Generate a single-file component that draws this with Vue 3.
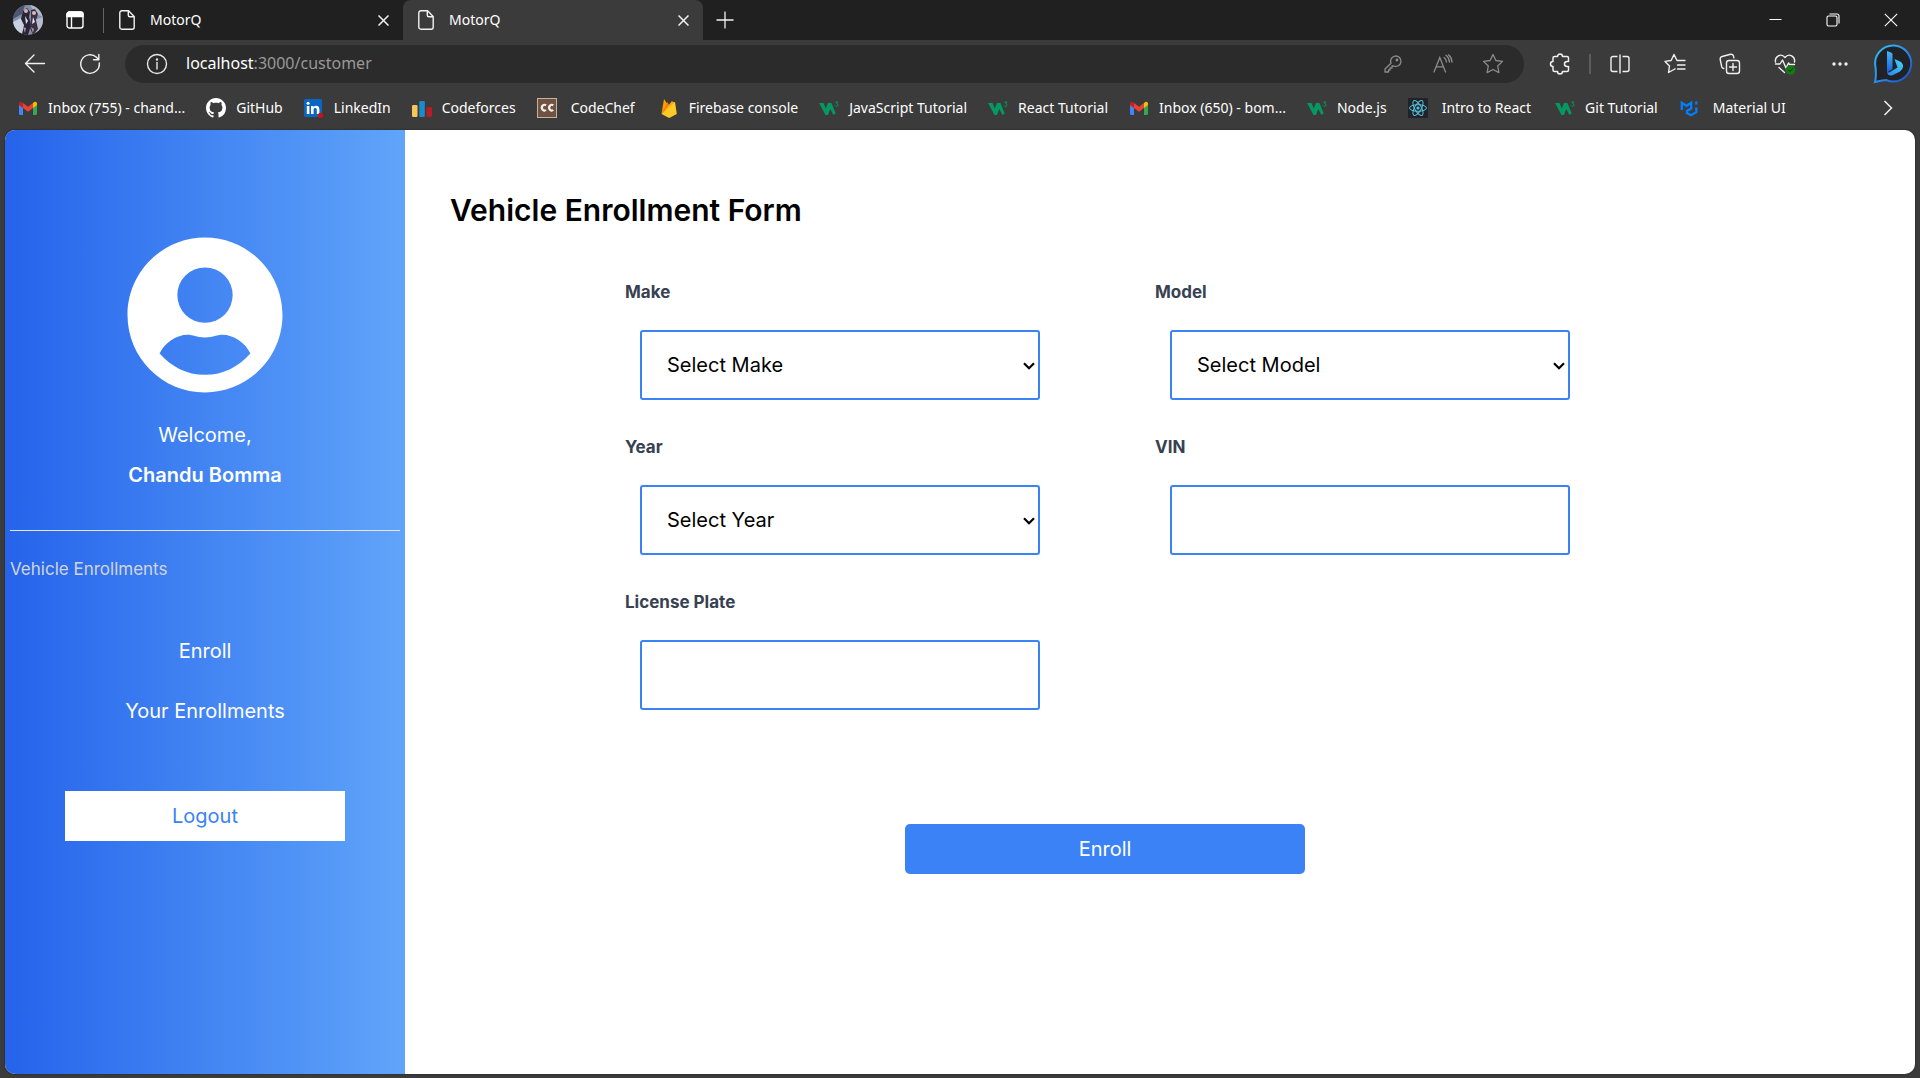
<script setup>
import { ref } from 'vue'

const bookmarks = [
  { icon: 'gmail', label: 'Inbox (755) - chand...' },
  { icon: 'github', label: 'GitHub' },
  { icon: 'linkedin', label: 'LinkedIn' },
  { icon: 'codeforces', label: 'Codeforces' },
  { icon: 'codechef', label: 'CodeChef', wide: true },
  { icon: 'firebase', label: 'Firebase console' },
  { icon: 'w3', label: 'JavaScript Tutorial' },
  { icon: 'w3', label: 'React Tutorial' },
  { icon: 'gmail', label: 'Inbox (650) - bom...' },
  { icon: 'w3', label: 'Node.js' },
  { icon: 'react', label: 'Intro to React', wide: true },
  { icon: 'w3', label: 'Git Tutorial' },
  { icon: 'mui', label: 'Material UI', wide: true },
]

const fields = [
  { id: 'make', label: 'Make', placeholder: 'Select Make' },
  { id: 'model', label: 'Model', placeholder: 'Select Model' },
  { id: 'year', label: 'Year', placeholder: 'Select Year' },
  { id: 'vin', label: 'VIN' },
  { id: 'plate', label: 'License Plate' },
]

const form = ref({ make: '', model: '', year: '', vin: '', plate: '' })
</script>

<template>
  <div class="window">
    <header class="chrome">
      <div class="tabstrip">
        <button class="profile" aria-label="Profile">
          <svg width="30" height="30" viewBox="0 0 30 30">
            <defs><clipPath id="face"><circle cx="15" cy="15" r="15" /></clipPath></defs>
            <g clip-path="url(#face)">
              <rect width="30" height="30" fill="#8290a8" />
              <path d="M0 0h12l-3 9-9 5z" fill="#4d5672" />
              <path d="M17 0h13v12l-8-4z" fill="#aebacb" />
              <path d="M0 17l8-4 4 8-4 9H0z" fill="#c8d1df" />
              <path d="M21 15l9-3v14l-7 1z" fill="#b4bccd" />
              <path d="M10 6l4-3 3 4-1 5 2 8-3 10H9l2-10-3-6z" fill="#2b2436" />
              <path d="M18 5l4-1 3 5-2 6 2 9-5 6-3-7 1-9z" fill="#3c3044" />
              <circle cx="13" cy="6" r="2" fill="#d9b3ae" />
              <circle cx="21" cy="8" r="2" fill="#dcb9b6" />
              <path d="M12 11l3 5-2 3zM20 12l2 5-3 2z" fill="#e6e3ec" />
              <path d="M10 22l3 1-1 5zM18 22l3 2-1 4z" fill="#a9929e" />
            </g>
          </svg>
        </button>
        <button class="tab-actions" aria-label="Tab actions">
          <svg width="18" height="18" viewBox="0 0 18 18" fill="none" stroke="#fff" stroke-width="1.4">
            <rect x="1" y="1" width="16" height="16" rx="2.5" />
            <path d="M1 3.500Q1 1 3.500 1H14.500Q17 1 17 3.500V5.500H1z" fill="#fff" />
            <path d="M5.500 5.500V17" />
          </svg>
        </button>
        <span class="strip-rule"></span>
        <div v-for="n in 2" :key="n" class="tab" :class="{ active: n === 2 }">
          <svg width="16" height="20" viewBox="0 0 16 20" fill="none" stroke="#f2f2f2" stroke-width="1.4">
            <path d="M3 .8h6.500L15.200 6.500V17.200a2 2 0 0 1-2 2H2.800a2 2 0 0 1-2-2V2.800a2 2 0 0 1 2-2z" />
            <path d="M9.300 1v4.200a1.500 1.500 0 0 0 1.500 1.500H15" />
          </svg>
          <span class="tab-title">MotorQ</span>
          <button class="tab-close" aria-label="Close tab">
            <svg width="11" height="11" viewBox="0 0 11 11" stroke="#f2f2f2" stroke-width="1.500"><path d="M.5.5l10 10M10.500.5l-10 10" /></svg>
          </button>
        </div>
        <button class="new-tab" aria-label="New tab">
          <svg width="18" height="18" viewBox="0 0 18 18" stroke="#f2f2f2" stroke-width="1.300"><path d="M9 .5v17M.5 9h17" /></svg>
        </button>
        <div class="win-controls">
          <button aria-label="Minimize"><svg width="14" height="14" viewBox="0 0 14 14" stroke="#fff"><path d="M1.500 6.500h12" /></svg></button>
          <button aria-label="Restore">
            <svg width="14" height="14" viewBox="0 0 14 14" fill="none" stroke="#fff" stroke-width="1.100">
              <rect x="1" y="3" width="10" height="10" rx="1.500" /><path d="M3.500 1H11a2 2 0 0 1 2 2v7.500" />
            </svg>
          </button>
          <button aria-label="Close"><svg width="14" height="14" viewBox="0 0 14 14" stroke="#fff" stroke-width="1.100"><path d="M.8.8l12.400 12.400M13.200.8L.8 13.200" /></svg></button>
        </div>
      </div>

      <div class="toolbar">
        <button class="tool" aria-label="Back">
          <svg width="22" height="22" viewBox="0 0 22 22" fill="none" stroke="#f0f0f0" stroke-width="1.400" stroke-linecap="round" stroke-linejoin="round"><path d="M20.500 10.500H1.500M10 2L1.500 10.500 10 19" /></svg>
        </button>
        <button class="tool" aria-label="Refresh">
          <svg width="22" height="22" viewBox="0 0 22 22" fill="none" stroke="#f0f0f0" stroke-width="1.400" stroke-linecap="round" stroke-linejoin="round"><path d="M20.300 10A9.300 9.300 0 1 1 17.500 4.300L19.500 6.500M19.800 1.500v5.300h-5.300" /></svg>
        </button>
        <div class="address">
          <svg class="info" width="22" height="22" viewBox="0 0 22 22" fill="none" stroke="#e8e8e8" stroke-width="1.400"><circle cx="11" cy="11" r="9.500" /><path d="M11 9.500v6.500" stroke-linecap="round" /><circle cx="11" cy="6.500" r=".5" fill="#e8e8e8" /></svg>
          <span class="url"><b>localhost</b>:3000/customer</span>
          <button class="inner" aria-label="Passwords">
            <svg width="18" height="18" viewBox="0 0 18 18" fill="none" stroke="#8c8c8c" stroke-width="1.300" stroke-linejoin="round"><path d="M7 8.300A5.200 5.200 0 1 1 9.700 11H8v2H6v2H4.500v2H1v-3z" /><circle cx="13" cy="5" r=".8" fill="#8c8c8c" /></svg>
          </button>
          <button class="inner" aria-label="Read aloud">
            <svg width="20" height="20" viewBox="0 0 20 20" fill="none" stroke="#8c8c8c" stroke-width="1.300" stroke-linecap="round"><path d="M1 18L6.800 3.500 12.500 18M3.200 12.800h7.200M11 3.500c1.500 1 2.300 2.500 2.500 4.500M13 1.300c2.200 1.500 3.200 3.700 3.500 6.700M15.500.8c2 1.700 3.300 4 3.500 7.200" /></svg>
          </button>
          <button class="inner" aria-label="Add to favorites">
            <svg width="22" height="22" viewBox="0 0 22 22" fill="none" stroke="#8c8c8c" stroke-width="1.300" stroke-linejoin="round"><path d="M11 1.500l2.900 6 6.600.9-4.800 4.600 1.200 6.600L11 16.500l-5.900 3.100L6.300 13 1.500 8.400l6.600-.9z" /></svg>
          </button>
        </div>
        <button class="tool ext" aria-label="Extensions">
          <svg width="22" height="22" viewBox="0 0 22 22" fill="none" stroke="#f0f0f0" stroke-width="1.500" stroke-linejoin="round"><path d="M8.500 3.500a2.500 2.500 0 0 1 5 0H18a1.500 1.500 0 0 1 1.500 1.500v3.500H18a2.500 2.500 0 0 0 0 5h1.500V17a1.500 1.500 0 0 1-1.500 1.500h-4.500a2.500 2.500 0 0 1-5 0H5.500A1.500 1.500 0 0 1 4 17v-3.500a2.500 2.500 0 0 1 0-5V5a1.500 1.500 0 0 1 1.500-1.500z" /></svg>
        </button>
        <span class="tool-rule"></span>
        <button class="tool" aria-label="Split screen">
          <svg width="20" height="22" viewBox="0 0 20 22" fill="none" stroke="#f0f0f0" stroke-width="1.400"><path d="M7.500 3.500H3a2 2 0 0 0-2 2v11a2 2 0 0 0 2 2h4.500M12.500 3.500H17a2 2 0 0 1 2 2v11a2 2 0 0 1-2 2h-4.500M10 1.500v19" /></svg>
        </button>
        <button class="tool" aria-label="Favorites">
          <svg width="22" height="22" viewBox="0 0 22 22" fill="none" stroke="#f0f0f0" stroke-width="1.400" stroke-linejoin="round" stroke-linecap="round"><path d="M19 7.500h-6L10 1.500l-2.900 6L1 8.400 5.500 13l-1 6.500 5.500-3M13.500 12H21M13.500 16H21M14 7.500h7M10 16.500l1-.6" /></svg>
        </button>
        <button class="tool" aria-label="Collections">
          <svg width="22" height="22" viewBox="0 0 22 22" fill="none" stroke="#f0f0f0" stroke-width="1.400" stroke-linecap="round"><rect x="7.500" y="7.500" width="13" height="13" rx="2.500" /><path d="M14 10.500v7M10.500 14h7M4.800 15.500A2.500 2.500 0 0 1 2.700 13.700L1.200 6.500A2.500 2.500 0 0 1 3.100 3.500L11.500 1.300A2.500 2.500 0 0 1 14.500 3.200L14.900 4.800" /></svg>
        </button>
        <button class="tool" aria-label="Browser essentials">
          <svg width="22" height="22" viewBox="0 0 22 22" fill="none" stroke="#f0f0f0" stroke-width="1.400" stroke-linejoin="round" stroke-linecap="round"><path d="M1.500 9C.5 3.500 7-.5 11 4.500 15-.5 21.500 3.500 20.500 9M1.500 11H6l2.500-4 3.500 8 2.500-5 1 1.500h5M5 14.500l5.500 5" /><circle cx="16.500" cy="17" r="4.800" fill="#137a13" stroke="none" /><path d="M14.500 17l1.500 1.500 2.500-3" stroke="#222" stroke-width="1" /></svg>
        </button>
        <button class="tool" aria-label="Settings">
          <svg width="18" height="6" viewBox="0 0 18 6" fill="#f0f0f0"><circle cx="3" cy="3" r="1.700" /><circle cx="9" cy="3" r="1.700" /><circle cx="15" cy="3" r="1.700" /></svg>
        </button>
        <button class="bing" aria-label="Bing chat">
          <svg width="40" height="40" viewBox="0 0 40 40">
            <defs>
              <linearGradient id="ring" x1="0" y1="0" x2="1" y2="1"><stop offset="0" stop-color="#2bc4ee" /><stop offset=".5" stop-color="#2c8df0" /><stop offset="1" stop-color="#1a46c0" /></linearGradient>
              <linearGradient id="stem" x1="0" y1="0" x2="0" y2="1"><stop offset="0" stop-color="#43b9f5" /><stop offset="1" stop-color="#1a5fe0" /></linearGradient>
              <linearGradient id="bowl" x1="1" y1="0" x2="0" y2="1"><stop offset="0" stop-color="#3fdcf2" /><stop offset="1" stop-color="#2f7df0" /></linearGradient>
            </defs>
            <path d="M20.500 1.500A18 18 0 1 1 13 36Q8 36.500 2 38 3.500 33 2.500 23A18 18 0 0 1 20.500 1.500z" fill="#202226" stroke="url(#ring)" stroke-width="2" />
            <path d="M14 7l4 1.500q1.500.6 1.500 2V25L14 28.500z" fill="url(#stem)" />
            <path d="M21.500 15l5.500 2.500q3.500 2 3 5.500-.3 2.500-3 4.500L20 31q-5 2-6-3 1 1 3 0l7.500-4.500z" fill="url(#bowl)" />
          </svg>
        </button>
      </div>

      <nav class="bookmarks">
        <a v-for="(b, i) in bookmarks" :key="i" href="#" class="bookmark" :class="{ wide: b.wide }">
          <svg v-if="b.icon === 'gmail'" width="20" height="20" viewBox="0 0 20 20">
            <path d="M1 6v9.500A1.500 1.500 0 0 0 2.500 17H5V9z" fill="#4285f4" /><path d="M19 6v9.500a1.500 1.500 0 0 1-1.500 1.500H15V9z" fill="#34a853" />
            <path d="M15 5l1-.8c1.300-1 3-.2 3 1.500V7l-4 3z" fill="#fbbc04" /><path d="M5 5l5 3.800L15 5v5l-5 3.800L5 10z" fill="#ea4335" /><path d="M5 5L4 4.200C2.700 3.200 1 4 1 5.700V7l4 3z" fill="#c5221f" />
          </svg>
          <svg v-else-if="b.icon === 'github'" width="20" height="20" viewBox="0 0 16 16"><path fill="#fff" d="M8 0C3.580 0 0 3.580 0 8c0 3.540 2.290 6.530 5.470 7.590.4.070.55-.17.55-.38 0-.19-.01-.82-.01-1.490-2.010.37-2.530-.49-2.690-.94-.09-.23-.48-.94-.82-1.130-.28-.15-.68-.52-.01-.53.63-.01 1.080.58 1.230.82.72 1.210 1.870.87 2.330.66.070-.52.280-.87.510-1.070-1.780-.2-3.640-.89-3.640-3.950 0-.87.310-1.590.82-2.150-.08-.2-.36-1.020.080-2.120 0 0 .67-.21 2.200.82.640-.18 1.320-.27 2-.27s1.360.090 2 .27c1.530-1.040 2.200-.82 2.200-.82.440 1.100.160 1.920.080 2.120.510.560.82 1.270.82 2.150 0 3.070-1.870 3.750-3.650 3.950.290.250.540.730.540 1.480 0 1.070-.01 1.930-.01 2.200 0 .210.150.460.550.380A8.010 8.010 0 0 0 16 8c0-4.420-3.580-8-8-8z" /></svg>
          <svg v-else-if="b.icon === 'linkedin'" width="20" height="20" viewBox="0 0 20 20">
            <rect x="0" y="1" width="18" height="18" rx="1.500" fill="#0a66c2" /><path d="M2.800 8h2.600v8H2.800zM7 8h2.500v1.200C10.700 7 15.400 7 15.400 11.300V16h-2.600v-4.300c0-2.400-3.200-2.200-3.200 0V16H7z" fill="#fff" /><circle cx="4.100" cy="5.300" r="1.500" fill="#fff" /><circle cx="16.500" cy="17.300" r="2.600" fill="#cc1016" />
          </svg>
          <svg v-else-if="b.icon === 'codeforces'" width="20" height="20" viewBox="0 0 20 20"><rect x="0" y="7" width="5.500" height="12" rx="1.200" fill="#f5c65a" /><rect x="7.300" y="3" width="5.500" height="16" rx="1.200" fill="#1a8ccc" /><rect x="14.500" y="9" width="5.500" height="10" rx="1.200" fill="#b71d24" /></svg>
          <svg v-else-if="b.icon === 'codechef'" width="20" height="20" viewBox="0 0 20 20" fill="none">
            <rect x=".5" y=".5" width="19" height="19" fill="#6f5342" stroke="#c9b29c" /><path d="M9 7.300A2.600 2.900 0 1 0 9 12M16.300 7.300a2.600 2.900 0 1 0 0 4.700" stroke="#f7efe6" stroke-width="2.200" />
          </svg>
          <svg v-else-if="b.icon === 'firebase'" width="20" height="20" viewBox="0 0 20 20"><path d="M2.500 16L5 1l4 6z" fill="#ffa000" /><path d="M2.500 16L8.500 4l2 4z" fill="#f57c00" /><path d="M2.500 16L13.800 4.500 16 4l1.800 12-7.600 4z" fill="#ffca28" /><path d="M2.500 16L13 3l2 2z" fill="#ffa712" /></svg>
          <svg v-else-if="b.icon === 'w3'" width="20" height="20" viewBox="0 0 20 20" fill="none"><path d="M0 5h4.500l2.300 5.500L9 5h3.500l4.200 10.500L14.500 17l-3.300-6L9 17H6.500z" fill="#059862" /><path d="M16.300 4h2.700l-1.400 2c2 0 1.700 2.600-.2 2.500-.7 0-1.100-.3-1.400-.8" stroke="#059862" stroke-width="1" /></svg>
          <svg v-else-if="b.icon === 'react'" width="20" height="20" viewBox="0 0 20 20" fill="none" stroke="#58c4dc">
            <rect width="20" height="20" rx="1" fill="#20232a" stroke="none" /><ellipse cx="10" cy="10" rx="8.500" ry="3.300" /><ellipse cx="10" cy="10" rx="8.500" ry="3.300" transform="rotate(60 10 10)" /><ellipse cx="10" cy="10" rx="8.500" ry="3.300" transform="rotate(120 10 10)" /><circle cx="10" cy="10" r="1.600" fill="#58c4dc" stroke="none" />
          </svg>
          <svg v-else width="20" height="20" viewBox="0 0 20 20" fill="none" stroke="#007fff" stroke-width="2.300"><path d="M2.800 12V4.800L7.500 7.800 12.200 4.800V10.500L8 13v2l4 2.200 5.300-3V9.500M17.300 3.500v3" /></svg>
          <span>{{ b.label }}</span>
        </a>
        <button class="more" aria-label="More bookmarks">
          <svg width="10" height="16" viewBox="0 0 10 16" fill="none" stroke="#f0f0f0" stroke-width="1.500"><path d="M1.500 1l7 7-7 7" /></svg>
        </button>
      </nav>
    </header>

    <div class="page">
      <aside class="sidebar">
        <svg class="avatar" width="186" height="186" viewBox="0 0 24 24" fill="#fff" fill-rule="evenodd">
          <path d="M12 2C6.480 2 2 6.480 2 12s4.480 10 10 10 10-4.480 10-10S17.520 2 12 2zM12 5.860A3.570 3.570 0 1 1 12 13a3.570 3.570 0 0 1 0-7.140zM12 19.720c-2.400 0-4.300-1.050-5.860-2.760.7-1.400 2.200-2.400 3.600-2.400.75 0 1.100.34 2.260.34s1.500-.34 2.260-.34c1.400 0 2.900 1 3.600 2.400-1.560 1.710-3.460 2.760-5.860 2.760z" />
        </svg>
        <p class="welcome">Welcome,</p>
        <p class="user">Chandu Bomma</p>
        <hr />
        <h2>Vehicle Enrollments</h2>
        <nav class="menu">
          <a href="#">Enroll</a>
          <a href="#">Your Enrollments</a>
        </nav>
        <button class="logout">Logout</button>
      </aside>

      <main>
        <h1>Vehicle Enrollment Form</h1>
        <form @submit.prevent>
          <div class="fields">
            <div v-for="f in fields" :key="f.id" class="field">
              <label :for="f.id">{{ f.label }}</label>
              <div v-if="f.placeholder" class="control">
                <select :id="f.id" v-model="form[f.id]">
                  <option value="">{{ f.placeholder }}</option>
                </select>
                <svg class="caret" width="12" height="8" viewBox="0 0 12 8" fill="none" stroke="#000" stroke-width="2.200"><path d="M1 1.200l5 5 5-5" /></svg>
              </div>
              <div v-else class="control">
                <input :id="f.id" v-model="form[f.id]" type="text" />
              </div>
            </div>
          </div>
          <button class="submit" type="submit">Enroll</button>
        </form>
      </main>
    </div>
  </div>
</template>

<style>
body {
  margin: 0;
  background: #3b3b3b;
}
</style>

<style scoped>
* {
  box-sizing: border-box;
}
button {
  padding: 0;
  border: 0;
  background: none;
  color: inherit;
  font: inherit;
  display: flex;
  align-items: center;
  justify-content: center;
  flex: none;
}
svg {
  flex: none;
  display: block;
}
a {
  color: inherit;
  text-decoration: none;
}
.window {
  min-height: 100vh;
  display: flex;
  flex-direction: column;
  background: #3b3b3b;
  font-family: Inter, sans-serif;
}
.chrome {
  color: #fff;
  font-family: "Noto Sans", "Open Sans", sans-serif;
  font-size: 14px;
}
.tabstrip {
  height: 40px;
  display: flex;
  align-items: center;
  background: #202020;
}
.profile {
  margin-left: 13px;
}
.tab-actions {
  margin: 0 19px 0 23px;
}
.strip-rule {
  width: 1px;
  height: 25px;
  background: #666;
}
.tab {
  width: 299px;
  height: 40px;
  padding: 0 14px 0 15px;
  display: flex;
  align-items: center;
  border-radius: 8px 8px 0 0;
}
.tab.active {
  width: 300px;
  background: #3b3b3b;
}
.tab-title {
  flex: 1;
  padding: 0 0 2px 15px;
}
.new-tab {
  margin-left: 13px;
}
.win-controls {
  display: flex;
  margin-left: auto;
}
.win-controls button {
  width: 58px;
  height: 40px;
}
.toolbar {
  height: 48px;
  padding: 0 7px 0 7px;
  display: flex;
  align-items: center;
}
.tool {
  width: 55px;
  height: 38px;
}
.address {
  flex: 1;
  height: 38px;
  margin-left: 8px;
  padding: 0 6px 0 21px;
  display: flex;
  align-items: center;
  border-radius: 19px;
  background: #2b2b2b;
}
.url {
  flex: 1;
  padding: 0 0 2px 18px;
  font-size: 16px;
  color: #999;
}
.url b {
  color: #fff;
  font-weight: 400;
}
.inner {
  width: 50px;
  height: 38px;
}
.ext {
  margin-left: 8px;
}
.tool-rule {
  width: 2px;
  height: 20px;
  margin: 0 1px 0 2px;
  background: #5c5c5c;
}
.bing {
  margin-left: 6px;
}
.bookmarks {
  height: 42px;
  padding: 0 27px 2px 18px;
  display: flex;
  align-items: center;
  gap: 21px;
  white-space: nowrap;
}
.bookmark {
  display: flex;
  align-items: center;
  gap: 10px;
}
.bookmark span {
  padding-bottom: 2px;
}
.bookmark.wide {
  gap: 14px;
  margin-right: 3px;
}
.more {
  margin-left: auto;
}
.page {
  flex: 1;
  display: flex;
  margin: 0 5px 4px;
  border-radius: 10px;
  overflow: hidden;
  background: #fff;
  box-shadow: 0 0 2px #1c1c1c;
}
.sidebar {
  width: 400px;
  flex: none;
  padding: 92px 5px 0;
  display: flex;
  flex-direction: column;
  align-items: center;
  background: linear-gradient(to right, #2563eb, #60a5fa);
  color: #fff;
  font-size: 20px;
  line-height: 30px;
}
.welcome {
  margin: 12px 0 10px;
}
.user {
  margin: 0;
  font-weight: 600;
}
hr {
  width: 100%;
  height: 1px;
  margin: 40px 0 0;
  border: 0;
  background: #e5e7eb;
}
h2 {
  align-self: stretch;
  margin: 23px 0 0;
  font-size: 17px;
  font-weight: 400;
  color: #d1d5db;
}
.menu {
  margin-top: 52px;
  display: flex;
  flex-direction: column;
  align-items: center;
  gap: 30px;
}
.logout {
  width: 280px;
  height: 50px;
  margin-top: 65px;
  background: #fff;
  color: #3b82f6;
}
main {
  flex: 1;
  padding: 60px 155px 40px 45px;
}
h1 {
  margin: 0;
  font-size: 30px;
  line-height: 40px;
  font-weight: 600;
  color: #000;
}
form {
  margin-top: 50px;
  display: flex;
  flex-direction: column;
  align-items: center;
}
.fields {
  display: grid;
  grid-template-columns: 430px 430px;
  column-gap: 100px;
  row-gap: 35px;
}
.field label {
  display: block;
  line-height: 25px;
  font-size: 17px;
  font-weight: 700;
  color: #374151;
}
.control {
  position: relative;
  margin: 25px 15px 0;
  height: 70px;
  display: flex;
}
select,
input {
  appearance: none;
  width: 100%;
  padding: 0 25px;
  border: 2px solid #3b82f6;
  border-radius: 3px;
  background: #fff;
  font: 20px Inter, sans-serif;
  color: #000;
}
.caret {
  position: absolute;
  right: 5px;
  top: 32px;
  pointer-events: none;
}
.submit {
  width: 400px;
  height: 50px;
  margin-top: 114px;
  border-radius: 5px;
  background: #3b82f6;
  color: #fff;
  font-size: 20px;
}
</style>
